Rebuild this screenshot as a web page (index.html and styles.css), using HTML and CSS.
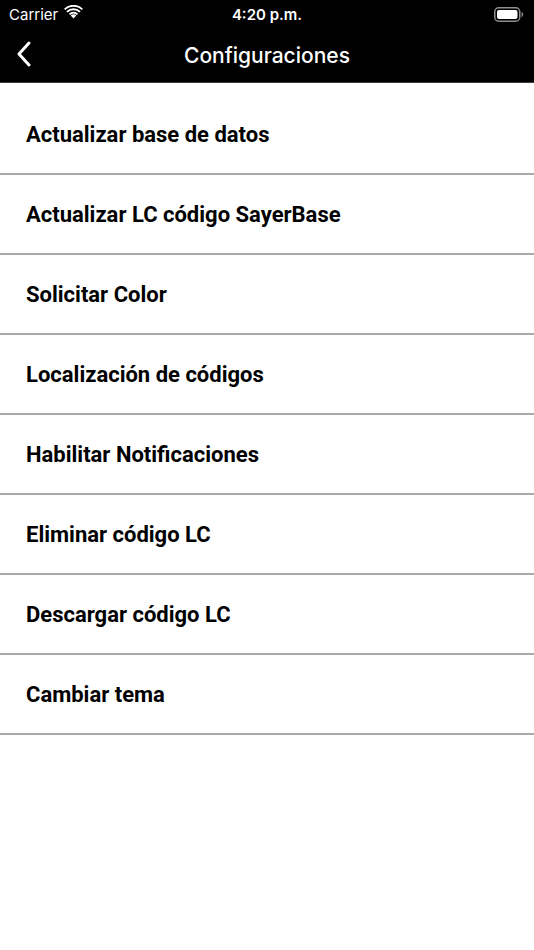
FILE: index.html
```html
<!DOCTYPE html>
<html lang="es">
<head>
    <meta charset="UTF-8">
    <meta name="viewport" content="width=device-width, initial-scale=1.0">
    <title>Configuraciones</title>
    <link rel="stylesheet" href="styles.css">
</head>
<body>

    <div class="top-bar">
        <div class="status-bar">
            <div class="carrier">
                Carrier
                <svg class="wifi" width="19" height="14" viewBox="0 0 18 13">
                    <path d="M9 12.6 L6.4 9.9 A3.7 3.7 0 0 1 11.6 9.9 Z" fill="#fff"/>
                    <path d="M4.6 8.1 A6.3 6.3 0 0 1 13.4 8.1 L12.1 9.4 A4.5 4.5 0 0 0 5.9 9.4 Z" fill="#fff"/>
                    <path d="M2.2 5.7 A9.7 9.7 0 0 1 15.8 5.7 L14.5 7 A7.9 7.9 0 0 0 3.5 7 Z" fill="#fff"/>
                    <path d="M0 3.4 A12.8 12.8 0 0 1 18 3.4 L16.7 4.7 A11 11 0 0 0 1.3 4.7 Z" fill="#fff"/>
                </svg>
            </div>
            <div class="clock">4:20 p.m.</div>
            <div class="battery">
                <svg width="30" height="15" viewBox="0 0 30 15">
                    <rect x="0.75" y="0.75" width="25" height="13.5" rx="4" fill="none" stroke="#8e8e8e" stroke-width="1.5"/>
                    <rect x="3" y="3" width="20.5" height="9" rx="2" fill="#fff"/>
                    <path d="M27.6 5 Q29.2 5.3 29.2 7.5 Q29.2 9.7 27.6 10 Z" fill="#8e8e8e"/>
                </svg>
            </div>
        </div>
        <div class="nav-bar">
            <svg class="back" width="16" height="26" viewBox="0 0 16 26">
                <path d="M13 2 L3 13 L13 24" fill="none" stroke="#fff" stroke-width="3" stroke-linecap="round" stroke-linejoin="round"/>
            </svg>
            <h1>Configuraciones</h1>
        </div>
    </div>

    <ul class="settings-list">
        <li>Actualizar base de datos</li>
        <li>Actualizar LC código SayerBase</li>
        <li>Solicitar Color</li>
        <li>Localización de códigos</li>
        <li>Habilitar Notificaciones</li>
        <li>Eliminar código LC</li>
        <li>Descargar código LC</li>
        <li>Cambiar tema</li>
    </ul>

</body>
</html>
```

FILE: styles.css
```css
body {
    margin: 0;
    background-color: #ffffff;
    font-family: Roboto, "Liberation Sans", Arial, sans-serif;
    color: #000000;
    width: 534px;
    min-height: 950px;
}
.top-bar {
    background-color: #000000;
    color: #ffffff;
    font-family: Inter, Roboto, "Liberation Sans", sans-serif;
}
.status-bar {
    height: 28px;
    display: flex;
    align-items: center;
    justify-content: space-between;
    padding: 0 10px 0 9px;
    position: relative;
}
.carrier {
    display: flex;
    align-items: center;
    gap: 6px;
    font-size: 15px;
    width: 120px;
}
.wifi {
    margin-top: -4px;
}
.clock {
    font-size: 15px;
    font-weight: 600;
    position: absolute;
    left: 0;
    right: 0;
    text-align: center;
    top: 5px;
}
.battery {
    display: flex;
    align-items: center;
}
.nav-bar {
    height: 55px;
    display: flex;
    align-items: center;
    position: relative;
    border-bottom: 1px solid #3a3a3a;
    box-sizing: border-box;
}
.back {
    position: absolute;
    left: 16px;
    top: 13px;
}
.nav-bar h1 {
    flex: 1;
    margin: 0;
    text-align: center;
    font-size: 21px;
    font-weight: 500;
}
.settings-list {
    list-style: none;
    margin: 0;
    padding: 12px 0 0;
}
.settings-list li {
    height: 78px;
    display: flex;
    align-items: center;
    padding-left: 26px;
    font-size: 22px;
    font-weight: bold;
    border-bottom: 2px solid #aaaaaa;
}
```
